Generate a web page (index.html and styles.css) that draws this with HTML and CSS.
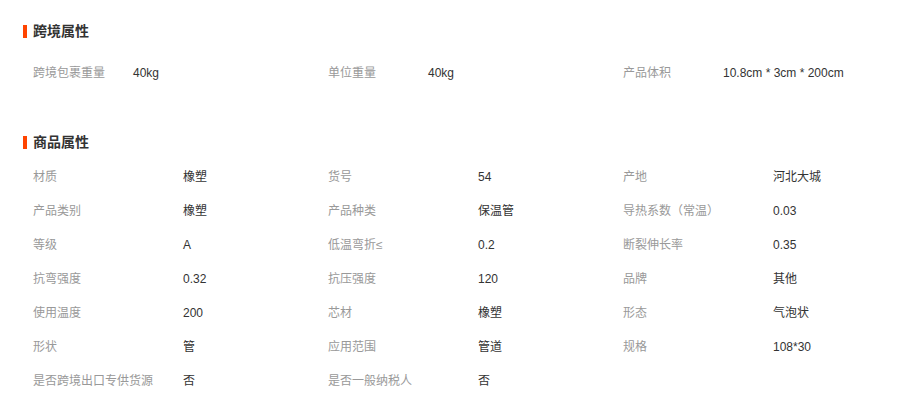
FILE: index.html
```html
<!DOCTYPE html>
<html lang="zh">
<head>
<meta charset="utf-8">
<link rel="stylesheet" href="styles.css">
</head>
<body>
<div class="page">
  <section class="sec sec-cross">
    <h3 class="title">跨境属性</h3>
    <div class="grid grid-narrow">
      <div class="cell"><span class="k">跨境包裹重量</span><span class="v">40kg</span></div>
      <div class="cell"><span class="k">单位重量</span><span class="v">40kg</span></div>
      <div class="cell"><span class="k">产品体积</span><span class="v">10.8cm * 3cm * 200cm</span></div>
    </div>
  </section>
  <section class="sec sec-goods">
    <h3 class="title">商品属性</h3>
    <div class="grid">
      <div class="cell"><span class="k">材质</span><span class="v">橡塑</span></div>
      <div class="cell"><span class="k">货号</span><span class="v">54</span></div>
      <div class="cell"><span class="k">产地</span><span class="v">河北大城</span></div>
      <div class="cell"><span class="k">产品类别</span><span class="v">橡塑</span></div>
      <div class="cell"><span class="k">产品种类</span><span class="v">保温管</span></div>
      <div class="cell"><span class="k">导热系数（常温）</span><span class="v">0.03</span></div>
      <div class="cell"><span class="k">等级</span><span class="v">A</span></div>
      <div class="cell"><span class="k">低温弯折≤</span><span class="v">0.2</span></div>
      <div class="cell"><span class="k">断裂伸长率</span><span class="v">0.35</span></div>
      <div class="cell"><span class="k">抗弯强度</span><span class="v">0.32</span></div>
      <div class="cell"><span class="k">抗压强度</span><span class="v">120</span></div>
      <div class="cell"><span class="k">品牌</span><span class="v">其他</span></div>
      <div class="cell"><span class="k">使用温度</span><span class="v">200</span></div>
      <div class="cell"><span class="k">芯材</span><span class="v">橡塑</span></div>
      <div class="cell"><span class="k">形态</span><span class="v">气泡状</span></div>
      <div class="cell"><span class="k">形状</span><span class="v">管</span></div>
      <div class="cell"><span class="k">应用范围</span><span class="v">管道</span></div>
      <div class="cell"><span class="k">规格</span><span class="v">108*30</span></div>
      <div class="cell"><span class="k">是否跨境出口专供货源</span><span class="v">否</span></div>
      <div class="cell"><span class="k">是否一般纳税人</span><span class="v">否</span></div>
    </div>
  </section>
</div>
</body>
</html>
```

FILE: styles.css
```css
* { box-sizing: border-box; }
html, body {
  margin: 0;
  padding: 0;
  background: #fff;
}
body {
  font-family: "Liberation Sans", "Noto Sans CJK SC", sans-serif;
  font-size: 12px;
  color: #333;
}
.page {
  padding: 18px 0 0 23px;
}
.title {
  margin: 0;
  height: 26px;
  line-height: 26px;
  font-size: 14px;
  font-weight: bold;
  color: #333;
  display: flex;
  align-items: center;
}
.title::before {
  content: "";
  display: inline-block;
  width: 4px;
  height: 13px;
  background: #ff4400;
  margin-right: 6px;
}
.grid {
  display: grid;
  grid-template-columns: 295px 295px 295px;
  padding-left: 10px;
}
.cell {
  display: flex;
  height: 34px;
  line-height: 34px;
  align-items: baseline;
}
.k {
  width: 150px;
  color: #999;
  flex: none;
}
.v {
  color: #333;
}
.grid-narrow .k {
  width: 100px;
}
.sec-cross .grid {
  margin-top: 12px;
}
.sec-goods {
  margin-top: 39px;
}
.sec-goods .grid {
  margin-top: 5px;
}
```
